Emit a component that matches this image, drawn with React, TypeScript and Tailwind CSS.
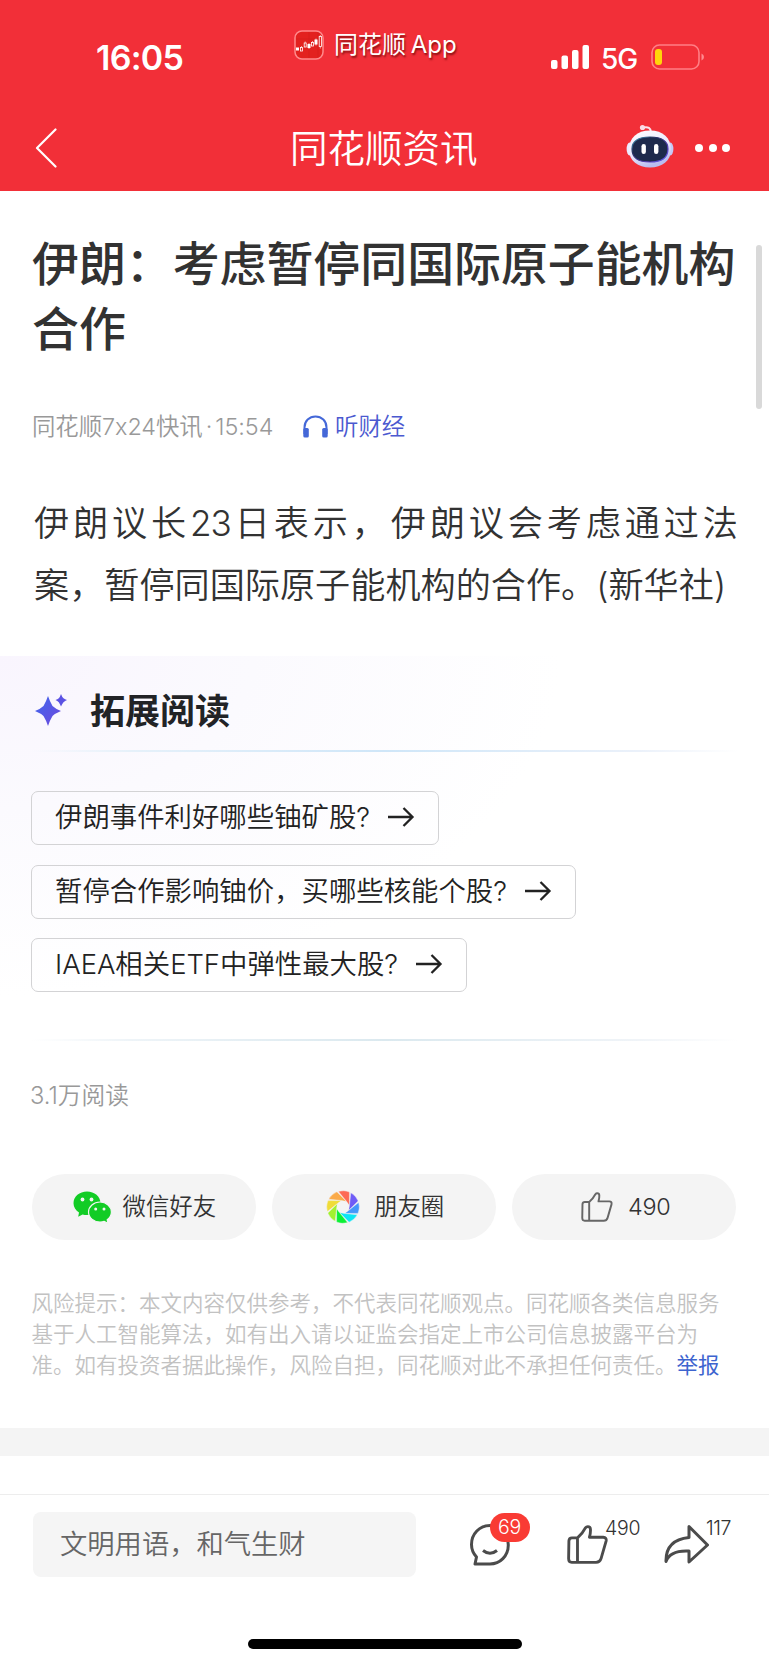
import React from "react";

const questions = [
  { text: "伊朗事件利好哪些铀矿股?", width: "w-[408px]" },
  { text: "暂停合作影响铀价，买哪些核能个股?", width: "w-[545px]" },
  { text: "IAEA相关ETF中弹性最大股?", width: "w-[436px]" },
];

function AppLogo() {
  return (
    <svg width="30" height="30" viewBox="0 0 30 30" className="shrink-0">
      <rect x="1" y="1" width="28" height="28" rx="7" fill="#e3211f" stroke="#ff8a8c" strokeWidth="1.500" />
      <path d="M2 9H28M15 2V28M24 2V28" stroke="#c91c1c" strokeWidth=".6" opacity=".6" />
      <g fill="#fff">
        <rect x="2" y="17.500" width="3" height="3" />
        <rect x="13.500" y="14" width="3" height="4" />
        <rect x="20.500" y="9.500" width="3" height="5" />
      </g>
      <g fill="none" stroke="#fff" strokeWidth=".8">
        <rect x="6.500" y="17.500" width="2" height="3.500" />
        <rect x="10.200" y="13" width="2" height="4" />
        <rect x="17.500" y="12.500" width="2" height="3.500" />
        <rect x="25.200" y="6.500" width="2.200" height="10" />
        <path d="M7.500 16V17.500M11.200 11.500V13M15 13V19M18.500 11V12.500M22 8.500V15.500M26.300 5V6.500M26.300 16.500V18.500" strokeWidth=".6" />
      </g>
    </svg>
  );
}

function Robot() {
  return (
    <svg width="48" height="46" viewBox="0 0 48 46" className="shrink-0">
      <defs>
        <linearGradient id="shell" x1="0" y1="0" x2="0.4" y2="1">
          <stop offset="0" stopColor="#fff" />
          <stop offset=".6" stopColor="#ece9fd" />
          <stop offset="1" stopColor="#b9bdf0" />
        </linearGradient>
        <linearGradient id="rim" x1="0" y1="0" x2="1" y2="1">
          <stop offset="0" stopColor="#4ab0cd" />
          <stop offset=".3" stopColor="#24305c" />
          <stop offset=".75" stopColor="#5a3dc0" />
          <stop offset="1" stopColor="#5a6bf5" />
        </linearGradient>
      </defs>
      <path d="M17.500 4.500C22 3.500 25 5 25 9.500" fill="none" stroke="#fbe4ee" strokeWidth="2" />
      <circle cx="16.500" cy="4.500" r="2.600" fill="#fbdce6" />
      <ellipse cx="3.600" cy="26" rx="3" ry="6.500" fill="#eceaff" />
      <ellipse cx="44.400" cy="26" rx="3" ry="6.500" fill="#c6c8f6" />
      <path d="M24 7.500C37 7.500 45 15 45 26.500C45 38 36 44.500 24 44.500C12 44.500 3 38 3 26.500C3 15 11 7.500 24 7.500Z" fill="url(#shell)" />
      <path d="M24 14C36 14 42 18 42 26C42 35 36 39 24 39C12 39 6 35 6 26C6 18 12 14 24 14Z" fill="#1e2a4c" stroke="url(#rim)" strokeWidth="1.200" />
      <rect x="15.500" y="21" width="4.400" height="10" rx="2.200" fill="#fff" />
      <rect x="28" y="21" width="4.400" height="10" rx="2.200" fill="#fff" />
    </svg>
  );
}

function Wechat() {
  return (
    <svg width="39" height="33" viewBox="0 0 39 33" className="shrink-0">
      <path d="M14 .5C21.500 .5 27.500 5.500 27.500 12.200C27.500 19 21.500 24 14 24C12.400 24 11 23.800 9.600 23.400L5.200 25.700L6 21.600C2.700 19.400 .5 16.200 .5 12.200C.5 5.500 6.500 .5 14 .5Z" fill="#12cc25" />
      <path d="M27 11C33.300 11 38.400 15.500 38.400 21C38.400 24.200 36.800 27 34.200 28.800L35 32.200L31.200 30.400C29.900 30.800 28.500 31 27 31C20.700 31 15.500 26.600 15.500 21C15.500 15.500 20.700 11 27 11Z" fill="#12cc25" stroke="#f4f4f4" strokeWidth="1.200" />
      <g fill="#f4f4f4">
        <circle cx="9.500" cy="8.500" r="1.900" />
        <circle cx="18.500" cy="8.500" r="1.900" />
        <circle cx="22.700" cy="18" r="1.500" />
        <circle cx="31" cy="18" r="1.500" />
      </g>
    </svg>
  );
}

const bladeColors = ["#fd6a55", "#6f5cf6", "#4498fb", "#0ee5f4", "#0cf035", "#a2f22f", "#f0dc38", "#fbaa48"];

function Moments() {
  return (
    <svg width="34" height="34" viewBox="-17 -17 34 34" className="shrink-0">
      {bladeColors.map((color, i) => (
        <path
          key={color}
          d="M-4.600 -15.600A16.300 16.300 0 0 1 6.400 -15L6.400 -1.500L3.500 -5.600Z"
          fill={color}
          stroke="#f4f4f4"
          strokeWidth=".4"
          transform={`rotate(${i * 45})`}
        />
      ))}
      <circle r="6" fill="#f4f4f4" />
    </svg>
  );
}

function Thumb({ width, height, stroke, color }: { width: number; height: number; stroke: number; color: string }) {
  return (
    <svg width={width} height={height} viewBox="0 0 43 40" preserveAspectRatio="none" className="shrink-0" fill="none" stroke={color} strokeWidth={stroke} strokeLinejoin="round" strokeLinecap="round">
      <path d="M11 13.200H5.200Q2.200 13.200 2 16.200L1.700 34.500Q1.700 38.300 5 38.300H30.500Q34.500 38.300 35.700 34.500L41 16.500Q41.800 12.700 38 12.500H23.500Q24.800 8.500 24.600 4.500Q24.500 1.700 21.800 1.700Q20.300 1.700 19.300 3Q16.500 8.500 11 13.200V38" />
    </svg>
  );
}

export default function App() {
  return (
    <div lang="zh-CN" className="flex h-[1665px] w-[769px] flex-col overflow-hidden bg-white font-['Inter','Noto_Sans_CJK_SC',sans-serif] text-[#323232]">
      <header className="flex h-[191px] shrink-0 flex-col bg-[#f22f38] text-white">
        <div className="flex h-[104px] items-start">
          <div className="mt-[37px] ml-[96px] w-[198px] text-[34px] leading-[42px] font-semibold tracking-[-0.700px]">16:05</div>
          <div className="mt-[29px] flex w-[257px] items-center">
            <AppLogo />
            <span className="ml-[10px] text-[24px] leading-[32px] font-normal whitespace-nowrap [text-shadow:1px_2px_2px_rgba(90,0,0,.7)]">
              同花顺 <span className="-ml-[2px]">App</span>
            </span>
          </div>
          <svg width="38" height="25" viewBox="0 0 38 25" className="mt-[45px] shrink-0" fill="#fff">
            <rect x="0" y="15" width="6.500" height="9" rx="2" />
            <rect x="10.500" y="10.500" width="6.500" height="13.500" rx="2" />
            <rect x="21" y="5" width="6.500" height="19" rx="2" />
            <rect x="31.500" y="0" width="6.500" height="24" rx="2" />
          </svg>
          <span className="mt-[41px] ml-[12px] w-[50px] text-[28px] leading-[36px] font-medium tracking-[-1px]">5G</span>
          <svg width="54" height="26" viewBox="0 0 54 26" className="mt-[44px] shrink-0">
            <rect x="1" y="1" width="47" height="24" rx="7.500" fill="none" stroke="#ff7f85" strokeWidth="1.600" />
            <rect x="4" y="5" width="7" height="16" rx="3" fill="#ffd60a" />
            <path d="M50.500 9.500Q53 10.500 53 13Q53 15.500 50.500 16.500Z" fill="#ff8a8f" />
          </svg>
        </div>
        <div className="flex h-[87px] items-center">
          <svg width="24" height="40" viewBox="0 0 24 40" className="ml-[34px] shrink-0" fill="none" stroke="#fff" strokeWidth="2.200" strokeLinecap="round" strokeLinejoin="round">
            <path d="M21.500 1.500L3 20L21.500 38.500" />
          </svg>
          <h1 className="mt-[3px] ml-[232px] w-[336px] text-[37.500px] leading-[48px] font-[350] whitespace-nowrap">同花顺资讯</h1>
          <div className="-mt-[4px]"><Robot /></div>
          <div className="ml-[21px] flex gap-[5.500px]">
            <i className="size-2 rounded-full bg-white" />
            <i className="size-2 rounded-full bg-white" />
            <i className="size-2 rounded-full bg-white" />
          </div>
        </div>
      </header>

      <div className="flex h-[465px] shrink-0">
        <article className="w-[756px] shrink-0 pt-[41px] pl-[32px]">
          <h2 className="text-[46.900px] leading-[64.500px] font-medium whitespace-nowrap">
            伊朗：考虑暂停同国际原子能机构
            <br />
            合作
          </h2>
          <div className="mt-[50px] flex h-[32px] items-center text-[23.400px] leading-[32px] font-[350] whitespace-nowrap">
            <span className="w-[271px] tracking-[-0.050px] text-[#999]">同花顺7x24快讯<span className="mx-[3px]">·</span>15:54</span>
            <svg width="25" height="24" viewBox="0 0 25 24" className="shrink-0">
              <path d="M1.500 19V12.500C1.500 6 6.300 1.500 12.500 1.500S23.500 6 23.500 12.500V19" fill="none" stroke="#4468d8" strokeWidth="2" />
              <rect x=".3" y="13" width="5.500" height="9.500" rx="1.500" fill="#4468d8" />
              <rect x="19.200" y="13" width="5.500" height="9.500" rx="1.500" fill="#4468d8" />
            </svg>
            <span className="ml-[7px] text-[#4b59d0]">听财经</span>
          </div>
          <div className="mt-[49px] ml-[2px] w-[704px] text-[35.150px] leading-[62.400px] font-[350] whitespace-nowrap">
            <p className="[text-align-last:justify]">伊朗议长<span className="tracking-[-1px]">23</span>日表示，伊朗议会考虑通过法</p>
            <p>案，暂停同国际原子能机构的合作。(新华社)</p>
          </div>
        </article>
        <div className="mt-[54px] h-[164px] w-[6px] rounded-full bg-[#d9d9d9]" />
      </div>

      <section className="h-[385px] shrink-0 bg-[radial-gradient(ellipse_560px_340px_at_0_0,#f9f5fe_0%,#fbfafe_45%,#ffffff_100%)] px-[31px]">
        <div className="flex h-[94px] items-center pt-[15px]">
          <svg width="33" height="33" viewBox="0 0 33 33" className="ml-[4px] shrink-0">
            <defs>
              <linearGradient id="spark" x1="0" y1="0" x2="1" y2="1">
                <stop offset="0" stopColor="#3e67ee" />
                <stop offset="1" stopColor="#7048dc" />
              </linearGradient>
            </defs>
            <path d="M13 2Q14.500 6.500 17.500 12Q20 14.500 26 17Q20 19.500 17.500 22Q14.500 27 13 32Q11.500 27 8.500 22Q6 19.500 0 17Q6 14.500 8.500 12Q11.500 6.500 13 2Z" fill="url(#spark)" />
            <path d="M26 0Q27 3 28.500 4.300Q30 5.500 32 6Q30 6.800 28.500 8.300Q27 10 26 12.500Q25 10 23.800 8.300Q22.500 6.800 20.500 6Q22.500 5.500 23.800 4.300Q25 3 26 0Z" fill="#5b52e3" />
          </svg>
          <h3 className="ml-[22px] text-[35px] leading-[48px] font-bold text-[#222326]">拓展阅读</h3>
        </div>
        <div className="h-[2px] bg-[linear-gradient(to_right,transparent,#e6f1fa_14%,#cfe6f8_50%,#ebf1fa_86%,transparent)]" />
        <div className="mt-[39px] flex flex-col gap-[19.500px]">
          {questions.map((q) => (
            <button key={q.text} className={`flex h-[54px] items-center rounded-[7px] border border-[#d3d3d5] pb-[2px] pl-[23px] text-[27.400px] leading-[38px] font-[350] whitespace-nowrap text-[#222] ${q.width}`}>
              <span>{q.text}</span>
              <svg width="28" height="24" viewBox="0 0 28 24" className="mr-[23px] ml-auto shrink-0" fill="none" stroke="#222" strokeWidth="2.300">
                <path d="M1 12H25.500M16.500 3L25.500 12L16.500 21" />
              </svg>
            </button>
          ))}
        </div>
        <div className="mt-[47px] h-[2px] bg-[linear-gradient(to_right,transparent,#eef4f8_14%,#dbe9ef_50%,#f0f4f8_86%,transparent)]" />
      </section>

      <section className="flex h-[387px] shrink-0 flex-col px-[31px]">
        <p className="mt-[39px] -ml-px text-[23.700px] leading-[32px] font-[350] text-[#999]">3.1万阅读</p>
        <div className="mt-[62px] ml-[.5px] flex gap-[15.500px] text-[23.400px] leading-[32px] font-[350] whitespace-nowrap text-[#323232]">
          <div className="flex h-[66px] w-[224.500px] items-center rounded-full bg-[#f4f4f4] pl-[41px]">
            <Wechat />
            <span className="ml-[11px]">微信好友</span>
          </div>
          <div className="flex h-[66px] w-[224.500px] items-center rounded-full bg-[#f4f4f4] pl-[54px]">
            <Moments />
            <span className="ml-[14.500px]">朋友圈</span>
          </div>
          <div className="flex h-[66px] w-[224.500px] items-center rounded-full bg-[#f4f4f4] pl-[69.500px]">
            <Thumb width={32} height={30} stroke={2.6} color="#666" />
            <span className="ml-[15px] tracking-[-0.300px]">490</span>
          </div>
        </div>
        <p className="mt-[48px] ml-[.5px] text-[21.500px] leading-[31.200px] font-[350] whitespace-nowrap text-[#c2c2c2]">
          风险提示：本文内容仅供参考，不代表同花顺观点。同花顺各类信息服务
          <br />
          基于人工智能算法，如有出入请以证监会指定上市公司信息披露平台为
          <br />
          准。如有投资者据此操作，风险自担，同花顺对此不承担任何责任。
          <a className="font-normal text-[#3d64cf]">举报</a>
        </p>
      </section>

      <div className="h-[28px] shrink-0 bg-[#f4f4f4]" />

      <footer className="mt-[38px] flex h-[171px] shrink-0 flex-col border-t border-[#ededed]">
        <div className="mt-[17px] flex h-[65px]">
          <div className="ml-[33px] flex h-[65px] w-[383px] items-center rounded-[8px] bg-[#f5f5f5] pt-px pl-[27px] text-[27.300px] leading-[38px] font-[350] text-[#666]">文明用语，和气生财</div>
          <div className="relative ml-[54px] h-[65px] w-[97px]">
            <svg width="40" height="42" viewBox="0 0 40 42" className="mt-[12px]" fill="none" stroke="#4b4b4b" strokeWidth="3" strokeLinejoin="round">
              <path d="M20 1.500C9.500 1.500 1.500 10 1.500 20.500Q1.500 27.500 6.500 33L5 40H20C30 40 38.300 32 38.300 21S30 1.500 20 1.500Z" />
              <path d="M13 26.500Q20 32 27 26.500" strokeLinecap="butt" />
            </svg>
            <span className="absolute top-px left-[19.500px] flex h-[29px] w-[40px] items-center justify-center rounded-full bg-[#f93b34] text-[19.500px] leading-[29px] font-[350] tracking-[-0.300px] text-white">69</span>
          </div>
          <div className="flex w-[97px]">
            <div className="mt-[13px]"><Thumb width={41} height={39} stroke={3} color="#4b4b4b" /></div>
            <span className="mt-[3px] -ml-[3px] text-[19.500px] leading-[26px] font-[350] tracking-[-0.300px]">490</span>
          </div>
          <div className="flex">
            <svg width="45" height="39" viewBox="0 0 45 39" className="mt-[13px] shrink-0" fill="none" stroke="#4b4b4b" strokeWidth="3" strokeLinejoin="round">
              <path d="M25 1.500L43.500 20L25 37V26Q6 25 2 36.500Q1.500 15 25 12.500Z" />
            </svg>
            <span className="mt-[3px] -ml-[3px] text-[19.500px] leading-[26px] font-[350] tracking-[-0.400px]">117</span>
          </div>
        </div>
        <div className="mt-[62px] ml-[247.500px] h-[10px] w-[274px] rounded-full bg-black" />
      </footer>
    </div>
  );
}
